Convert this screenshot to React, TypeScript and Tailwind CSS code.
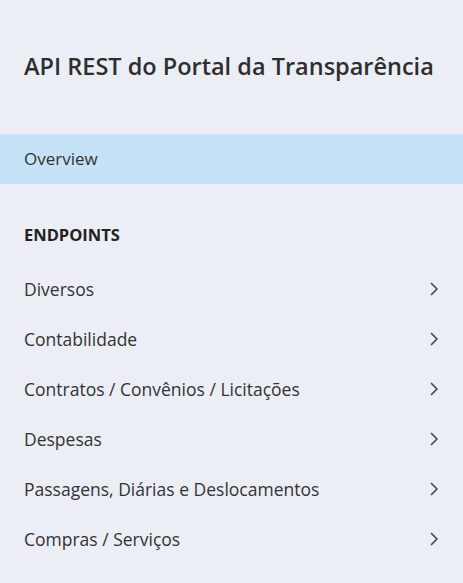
import React from "react";

const items = [
  "Diversos",
  "Contabilidade",
  "Contratos / Convênios / Licitações",
  "Despesas",
  "Passagens, Diárias e Deslocamentos",
  "Compras / Serviços",
];

function Chevron() {
  return (
    <svg width="10" height="14" viewBox="0 0 10 14" fill="none">
      <path d="M2.5 1.5 L8 7 L2.5 12.5" stroke="#4a4a4a" strokeWidth="1.7" strokeLinecap="round" strokeLinejoin="round" />
    </svg>
  );
}

export default function App() {
  return (
    <div className="w-[463px] h-[583px] overflow-hidden bg-[#eceef5] text-[#333333]" style={{ fontFamily: '"Open Sans", "Noto Sans", sans-serif' }}>
      <div className="h-[134px] px-6 pt-[48px]">
        <h1 className="text-[23.5px] font-semibold leading-[36px] text-[#2e2e2e] whitespace-nowrap">API REST do Portal da Transparência</h1>
      </div>
      <div className="h-[50px] bg-[#c5e2f6] px-6 flex items-center text-[17px]">Overview</div>
      <div className="px-6 pt-[40px] pb-[18px] text-[16.5px] font-bold leading-[22px] text-[#222222]">ENDPOINTS</div>
      <ul>
        {items.map((t) => (
          <li key={t} className="h-[50px] flex items-center justify-between pl-6 pr-[24px] text-[17.5px]">
            <span>{t}</span>
            <Chevron />
          </li>
        ))}
      </ul>
    </div>
  );
}
